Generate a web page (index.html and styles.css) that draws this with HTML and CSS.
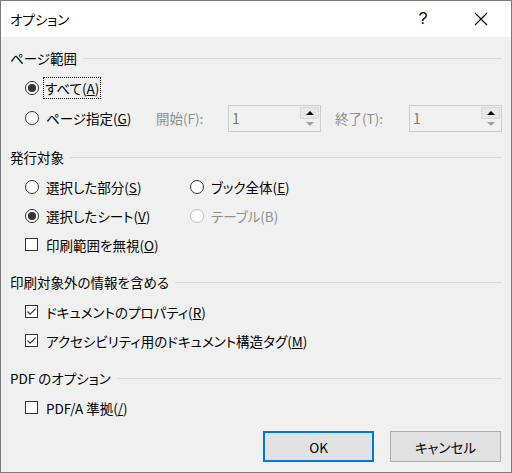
FILE: index.html
```html
<!DOCTYPE html>
<html lang="ja">
<head>
    <meta charset="UTF-8">
    <title>オプション</title>
    <link rel="stylesheet" href="styles.css">
</head>
<body>
    <div class="dialog">
        <div class="titlebar">
            <span class="title">オプション</span>
            <span class="help">?</span>
            <span class="close">
                <svg width="14" height="14" viewBox="0 0 14 14"><path d="M1 1 L13 13 M13 1 L1 13" stroke="#000" stroke-width="1.1" fill="none"/></svg>
            </span>
        </div>

        <div class="content">
            <!-- ページ範囲 -->
            <div class="group-title first"><span>ページ範囲</span></div>
            <div class="row r-first">
                <label class="option">
                    <span class="radio checked"></span>
                    <span class="text focus">すべて(<u>A</u>)</span>
                </label>
            </div>
            <div class="row spin-row">
                <label class="option range">
                    <span class="radio"></span>
                    <span class="text">ページ指定(<u>G</u>)</span>
                </label>
                <span class="spin-label from">開始(F):</span>
                <div class="spin">
                    <span class="spin-value">1</span>
                    <div class="spin-buttons">
                        <span class="spin-up"></span>
                        <span class="spin-down"></span>
                    </div>
                </div>
                <span class="spin-label to">終了(T):</span>
                <div class="spin">
                    <span class="spin-value">1</span>
                    <div class="spin-buttons">
                        <span class="spin-up"></span>
                        <span class="spin-down"></span>
                    </div>
                </div>
            </div>

            <!-- 発行対象 -->
            <div class="group-title"><span>発行対象</span></div>
            <div class="row r-first">
                <label class="option col1">
                    <span class="radio"></span>
                    <span class="text">選択した部分(<u>S</u>)</span>
                </label>
                <label class="option">
                    <span class="radio"></span>
                    <span class="text">ブック全体(<u>E</u>)</span>
                </label>
            </div>
            <div class="row">
                <label class="option col1">
                    <span class="radio checked"></span>
                    <span class="text">選択したシート(<u>V</u>)</span>
                </label>
                <label class="option disabled">
                    <span class="radio"></span>
                    <span class="text">テーブル(B)</span>
                </label>
            </div>
            <div class="row">
                <label class="option">
                    <span class="check"></span>
                    <span class="text">印刷範囲を無視(<u>O</u>)</span>
                </label>
            </div>

            <!-- 印刷対象外の情報を含める -->
            <div class="group-title"><span>印刷対象外の情報を含める</span></div>
            <div class="row r-first">
                <label class="option">
                    <span class="check">
                        <svg width="11" height="11" viewBox="0 0 11 11"><path d="M1.5 5.5 L4.2 8.2 L9.6 2.6" stroke="#333" stroke-width="1.1" fill="none"/></svg>
                    </span>
                    <span class="text">ドキュメントのプロパティ(<u>R</u>)</span>
                </label>
            </div>
            <div class="row">
                <label class="option">
                    <span class="check">
                        <svg width="11" height="11" viewBox="0 0 11 11"><path d="M1.5 5.5 L4.2 8.2 L9.6 2.6" stroke="#333" stroke-width="1.1" fill="none"/></svg>
                    </span>
                    <span class="text">アクセシビリティ用のドキュメント構造タグ(<u>M</u>)</span>
                </label>
            </div>

            <!-- PDF のオプション -->
            <div class="group-title"><span>PDF のオプション</span></div>
            <div class="row r-first">
                <label class="option">
                    <span class="check"></span>
                    <span class="text">PDF/A 準拠(<u>/</u>)</span>
                </label>
            </div>

            <div class="buttons">
                <button class="btn default">OK</button>
                <button class="btn">キャンセル</button>
            </div>
        </div>
    </div>
</body>
</html>
```

FILE: styles.css
```css
* {
    margin: 0;
    padding: 0;
    box-sizing: border-box;
}

body {
    font-family: "Noto Sans CJK JP", "Noto Sans", sans-serif;
    font-size: 13.5px;
    font-feature-settings: "palt";
    color: #000;
    background: #f0f0f0;
}

.dialog {
    width: 512px;
    height: 473px;
    border: 1px solid #7a7a7a;
    background: #f0f0f0;
}

/* タイトルバー */
.titlebar {
    height: 36px;
    background: #fff;
    display: flex;
    align-items: center;
    padding-left: 9px;
}

.title {
    flex: 1;
    line-height: 20px;
}

.help {
    width: 58px;
    text-align: center;
    font-family: "Liberation Sans", sans-serif;
    font-size: 16px;
}

.close {
    width: 58px;
    margin-right: 1px;
    display: flex;
    justify-content: center;
}

.content {
    padding: 0 9px;
}

/* グループ見出し */
.group-title {
    display: flex;
    align-items: center;
    height: 20px;
    margin-top: 13px;
    line-height: 20px;
    white-space: nowrap;
}

.group-title.first {
    margin-top: 11px;
}

.group-title::after {
    content: "";
    flex: 1;
    height: 1px;
    margin-left: 6px;
    background: #dadada;
}

.row {
    display: flex;
    align-items: center;
    height: 29px;
    padding-left: 15px;
    white-space: nowrap;
}

.row.r-first {
    margin-top: 5px;
}

.option {
    display: flex;
    align-items: center;
    gap: 8px;
    line-height: 20px;
    flex: none;
}

.option.col1 {
    width: 165px;
}

.option.range {
    width: 131px;
}

.option.disabled {
    color: #8f8f8f;
}

.text.focus {
    outline: 1px dotted #000;
    padding: 0 1px;
    margin-left: -2px;
}

/* ラジオボタン */
.radio {
    flex: none;
    width: 14px;
    height: 14px;
    margin-right: -1px;
    border: 1px solid #333;
    border-radius: 50%;
    background: #fff;
    display: flex;
    align-items: center;
    justify-content: center;
}

.radio.checked::after {
    content: "";
    width: 8px;
    height: 8px;
    border-radius: 50%;
    background: #333;
}

.disabled .radio {
    border-color: #c2c2c2;
}

/* チェックボックス */
.check {
    flex: none;
    width: 13px;
    height: 13px;
    border: 1px solid #333;
    background: #fff;
    display: flex;
    align-items: center;
    justify-content: center;
}

/* ページ指定の数値入力 */
.spin-row {
    height: 32px;
}

.spin-label {
    flex: none;
    color: #8f8f8f;
    line-height: 20px;
}

.spin-label.from {
    width: 72px;
}

.spin-label.to {
    margin-left: 14px;
    width: 74px;
}

.spin {
    flex: none;
    width: 93px;
    height: 27px;
    border: 1px solid #cccccc;
    background: #f0f0f0;
    display: flex;
    align-items: stretch;
}

.spin-value {
    flex: 1;
    padding-left: 3px;
    color: #7a7a7a;
    font-size: 14px;
    line-height: 25px;
}

.spin-buttons {
    width: 19px;
    margin: 1px 1px 1px 0;
    display: flex;
    flex-direction: column;
}

.spin-up, .spin-down {
    flex: 1;
    display: flex;
    align-items: center;
    justify-content: center;
}

.spin-up {
    background: #e8e8e8;
    border: 1px solid #d8d8d8;
}

.spin-up::after {
    content: "";
    border-left: 4px solid transparent;
    border-right: 4px solid transparent;
    border-bottom: 4px solid #000;
}

.spin-down::after {
    content: "";
    border-left: 4px solid transparent;
    border-right: 4px solid transparent;
    border-top: 4px solid #a0a0a0;
}

/* ボタン */
.buttons {
    display: flex;
    justify-content: flex-end;
    gap: 16px;
    margin-top: 9px;
    padding-right: 1px;
}

.btn {
    width: 111px;
    height: 31px;
    background: #e1e1e1;
    border: 1px solid #adadad;
    font-family: inherit;
    font-size: 13.5px;
    font-feature-settings: "palt";
    color: #000;
}

.btn.default {
    border: 2px solid #0078d7;
}
```
